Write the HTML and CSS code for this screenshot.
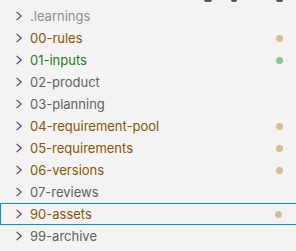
FILE: index.html
```html
<!DOCTYPE html>
<html>
 <head>
  <title>Explorer</title>
  <link rel="stylesheet" href="styles.css">
 </head>
 <body>
  <!-- restos de la barra de acciones, cortada arriba -->
  <div class="actions">
   <span class="act a1"></span>
   <span class="act a2"></span>
   <span class="act a3"></span>
  </div>
  <div class="tree">
   <div class="row ignored"><svg class="chev" width="6" height="10"><polyline points="0.6,0.8 5.2,5 0.6,9.2"/></svg><span class="name">.learnings</span></div>
   <div class="row modified"><svg class="chev" width="6" height="10"><polyline points="0.6,0.8 5.2,5 0.6,9.2"/></svg><span class="name">00-rules</span><span class="dot"></span></div>
   <div class="row added"><svg class="chev" width="6" height="10"><polyline points="0.6,0.8 5.2,5 0.6,9.2"/></svg><span class="name">01-inputs</span><span class="dot"></span></div>
   <div class="row"><svg class="chev" width="6" height="10"><polyline points="0.6,0.8 5.2,5 0.6,9.2"/></svg><span class="name">02-product</span></div>
   <div class="row"><svg class="chev" width="6" height="10"><polyline points="0.6,0.8 5.2,5 0.6,9.2"/></svg><span class="name">03-planning</span></div>
   <div class="row modified"><svg class="chev" width="6" height="10"><polyline points="0.6,0.8 5.2,5 0.6,9.2"/></svg><span class="name">04-requirement-pool</span><span class="dot"></span></div>
   <div class="row modified"><svg class="chev" width="6" height="10"><polyline points="0.6,0.8 5.2,5 0.6,9.2"/></svg><span class="name">05-requirements</span><span class="dot"></span></div>
   <div class="row modified"><svg class="chev" width="6" height="10"><polyline points="0.6,0.8 5.2,5 0.6,9.2"/></svg><span class="name">06-versions</span><span class="dot"></span></div>
   <div class="row"><svg class="chev" width="6" height="10"><polyline points="0.6,0.8 5.2,5 0.6,9.2"/></svg><span class="name">07-reviews</span></div>
   <div class="row modified selected"><svg class="chev" width="6" height="10"><polyline points="0.6,0.8 5.2,5 0.6,9.2"/></svg><span class="name">90-assets</span><span class="dot"></span></div>
   <div class="row"><svg class="chev" width="6" height="10"><polyline points="0.6,0.8 5.2,5 0.6,9.2"/></svg><span class="name">99-archive</span></div>
  </div>
 </body>
</html>
```

FILE: styles.css
```css
/* Explorador de archivos */
body {
 margin: 0;
 font-family: Inter, "Liberation Sans", sans-serif;
 font-size: 13px;
 background-color: #f3f3f3;
 overflow: hidden;
}
.actions {
 position: absolute;
 top: 0;
 left: 0;
 width: 296px;
 height: 3px;
}
.act {
 position: absolute;
 top: 0;
 height: 2px;
 background-color: #555;
 border-radius: 0 0 2px 2px;
}
.a1 { left: 204px; width: 8px; }
.a2 { left: 231px; width: 6px; }
.a3 { left: 276px; width: 7px; }
.tree {
 padding-top: 5px;
 width: 300px;
}
.row {
 display: flex;
 align-items: center;
 height: 22px;
 box-sizing: border-box;
 padding-left: 16px;
 padding-right: 17px;
 color: #616161;
}
.chev {
 flex: none;
 margin-right: 8px;
}
.chev polyline {
 fill: none;
 stroke: #424242;
 stroke-width: 1.1;
}
.name {
 flex: 1;
}
.dot {
 width: 7px;
 height: 7px;
 border-radius: 50%;
 background-color: #d3bc96;
}
.ignored .name {
 color: #8e8e90;
}
.modified .name {
 color: #895503;
}
.added .name {
 color: #1d7b1d;
}
.added .dot {
 background-color: #86c590;
}
.selected {
 border: 1px solid #0090f1;
 padding-left: 15px;
}
```
